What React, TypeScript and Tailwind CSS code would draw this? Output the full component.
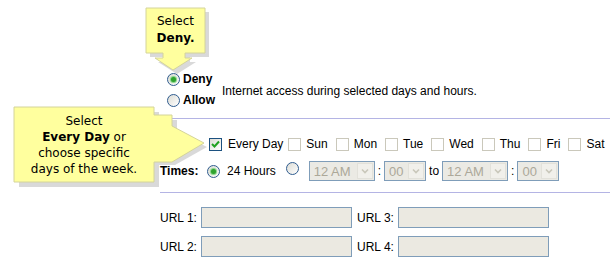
import clsx from "clsx";

const sans = "font-['Liberation_Sans',Arial,sans-serif]";
const verdana = "font-['DejaVu_Sans',Verdana,sans-serif]";

function Radio({ checked }: { checked?: boolean }) {
  return (
    <span className="relative inline-flex h-[13px] w-[13px] shrink-0 items-center justify-center rounded-full border border-[#2f5c8f] bg-gradient-to-br from-[#dcdcd5] to-white">
      {checked && <span className="h-[5px] w-[5px] rounded-full bg-[#2fa32f] shadow-[0_0_1px_1px_#7ed27e]" />}
    </span>
  );
}

function Check({ checked, disabled }: { checked?: boolean; disabled?: boolean }) {
  return (
    <span
      className={clsx(
        "inline-flex h-[13px] w-[13px] shrink-0 items-center justify-center border",
        disabled ? "border-[#cac8bb] bg-white" : "border-[#1c5180] bg-gradient-to-br from-[#dcdcd5] to-white"
      )}
    >
      {checked && (
        <svg width="9" height="9" viewBox="0 0 9 9">
          <path d="M1 4 L3.5 6.5 L8 1.5" fill="none" stroke="#21a121" strokeWidth="2" />
        </svg>
      )}
    </span>
  );
}

function Select({ value, width }: { value: string; width: string }) {
  return (
    <span className={clsx("flex h-[20px] items-center border border-[#7f9db9] bg-[#ebeae4] p-px", width)}>
      <span className="flex-1 pl-[3px] text-[13px] leading-none text-[#aca899]">{value}</span>
      <span className="flex h-full w-[16px] items-center justify-center bg-[#f1f0eb] border border-[#e2e1da]">
        <svg width="8" height="6" viewBox="0 0 8 6">
          <path d="M1 1.5 L4 4.5 L7 1.5" fill="none" stroke="#c9c7ba" strokeWidth="1.6" />
        </svg>
      </span>
    </span>
  );
}

function UrlField({ label }: { label: string }) {
  return (
    <div className="flex items-center">
      <span className="w-[41px]">{label}</span>
      <span className="h-[21px] w-[151px] border border-[#7f9db9] bg-[#ebe9e1]" />
    </div>
  );
}

const days = ["Sun", "Mon", "Tue", "Wed", "Thu", "Fri", "Sat"];

export default function App() {
  return (
    <div className={clsx("relative h-[271px] w-[616px] overflow-hidden bg-white text-[12px] text-black", sans)}>
      <div className="pt-[70px] pl-[160px]">
        <div className="flex items-center pl-[7px]">
          <div className="flex flex-col gap-[3px] font-bold leading-[18px]">
            <label className="flex items-center gap-[3px]">
              <Radio checked />
              Deny
            </label>
            <label className="flex items-center gap-[3px]">
              <Radio />
              Allow
            </label>
          </div>
          <span className="ml-[7px] mt-[2px]">Internet access during selected days and hours.</span>
        </div>

        <div className="mt-[9px] h-px w-[450px] bg-[#b4b4e4]" />

        <div className="mt-[16px] flex h-[18px] items-center pl-[49px]">
          <label className="mr-[5px] flex items-center gap-[6px]">
            <Check checked />
            Every Day
          </label>
          {days.map((d) => (
            <label key={d} className="mr-[8px] flex items-center gap-[5px]">
              <Check disabled />
              {d}
            </label>
          ))}
        </div>

        <div className="mt-[8px] flex items-center">
          <span className="w-[47px] font-bold">Times:</span>
          <label className="flex items-center gap-[7px]">
            <Radio checked />
            24 Hours
          </label>
          <span className="ml-[10px] mr-[10px]">
            <Radio />
          </span>
          <Select value="12 AM" width="w-[66px]" />
          <span className="px-[3px]">:</span>
          <Select value="00" width="w-[42px]" />
          <span className="px-[3px]">to</span>
          <Select value="12 AM" width="w-[66px]" />
          <span className="px-[3px]">:</span>
          <Select value="00" width="w-[42px]" />
        </div>

        <div className="mt-[11px] h-px w-[450px] bg-[#b4b4e4]" />

        <div className="mt-[14px] grid w-[390px] grid-cols-[197px_1fr] gap-y-[8px]">
          <UrlField label="URL 1:" />
          <UrlField label="URL 3:" />
          <UrlField label="URL 2:" />
          <UrlField label="URL 4:" />
        </div>
      </div>

      {/* callout: Select Deny */}
      <div className="absolute left-[140px] top-[4px] h-[70px] w-[75px]">
        <svg className="absolute inset-0" width="75" height="70" viewBox="0 0 75 70">
          <path d="M10 8 H69 V53 H50 V58 H56 L37 70 L18 58 H27 V53 H10 Z" fill="#c9c9c9" opacity="0.7" />
          <path d="M6 4 H65 V49 H45 V54 H52 L33 66 L15 54 H23 V49 H6 Z" fill="#ffff9e" stroke="#d4d49a" />
        </svg>
        <div className={clsx("relative w-[59px] pl-[6px] pt-[9px] text-center text-[12px] leading-[17px]", verdana)}>
          <div className="w-[59px]">Select</div>
          <div className="w-[59px] font-bold">Deny.</div>
        </div>
      </div>

      {/* callout: Every Day */}
      <div className="absolute left-[10px] top-[103px] h-[90px] w-[200px]">
        <svg className="absolute inset-0" width="200" height="90" viewBox="0 0 200 90">
          <path d="M9 9 H149 V17 H167 V29 L197 44 L165 62 H149 V84 H9 Z" fill="#c9c9c9" opacity="0.7" />
          <path d="M4 4 H144 V12 H162 V23 L194 40 L162 59 H144 V79 H4 Z" fill="#ffff9e" stroke="#d4d49a" />
        </svg>
        <div className={clsx("relative ml-[4px] w-[140px] pt-[10px] text-center text-[12px] leading-[16px]", verdana)}>
          <div>Select</div>
          <div>
            <b>Every Day</b> or
          </div>
          <div>choose specific</div>
          <div>days of the week.</div>
        </div>
      </div>
    </div>
  );
}
